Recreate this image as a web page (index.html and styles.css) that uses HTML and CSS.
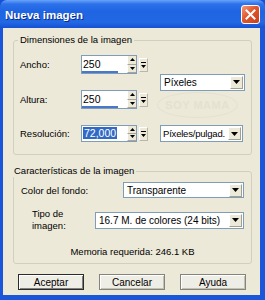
FILE: index.html
```
<!DOCTYPE html>
<html lang="es">
<head>
    <meta charset="UTF-8">
    <title>Nueva imagen</title>
    <link rel="stylesheet" href="styles.css">
</head>
<body>
    <div class="window">
        <div class="title-bar">
            <span class="title-text">Nueva imagen</span>
            <span class="close-btn">
                <svg width="11" height="11" viewBox="0 0 11 11">
                    <path d="M1.5 1.5 L9.5 9.5 M9.5 1.5 L1.5 9.5" stroke="#fff" stroke-width="2" stroke-linecap="square"/>
                </svg>
            </span>
        </div>
        <div class="window-body">
            <fieldset class="group dims">
                <legend>Dimensiones de la imagen</legend>
                <div class="watermark"><span>SOY MAMA</span></div>
                <div class="dims-grid">
                    <label class="field-label">Ancho:</label>
                    <div class="spin-box">
                        <div class="spin-text">
                            <span class="spin-value">250</span>
                            <span class="spin-bar"></span>
                        </div>
                        <div class="spin-arrows">
                            <span class="arrow"><svg width="5" height="3" viewBox="0 0 5 3"><path d="M2.5 0 L5 3 L0 3 Z" fill="#000"/></svg></span>
                            <span class="arrow"><svg width="5" height="3" viewBox="0 0 5 3"><path d="M0 0 L5 0 L2.5 3 Z" fill="#000"/></svg></span>
                        </div>
                    </div>
                    <span class="spin-menu"><svg width="5" height="6" viewBox="0 0 5 6"><path d="M0 0 H5 V1 H0 Z M0 3 H5 L2.5 6 Z" fill="#000"/></svg></span>

                    <div class="combo units">
                        <span class="combo-text">Píxeles</span>
                        <span class="combo-btn"><svg width="7" height="4" viewBox="0 0 7 4"><path d="M0 0 H7 L3.5 4 Z" fill="#000"/></svg></span>
                    </div>

                    <label class="field-label">Altura:</label>
                    <div class="spin-box">
                        <div class="spin-text">
                            <span class="spin-value">250</span>
                            <span class="spin-bar"></span>
                        </div>
                        <div class="spin-arrows">
                            <span class="arrow"><svg width="5" height="3" viewBox="0 0 5 3"><path d="M2.5 0 L5 3 L0 3 Z" fill="#000"/></svg></span>
                            <span class="arrow"><svg width="5" height="3" viewBox="0 0 5 3"><path d="M0 0 L5 0 L2.5 3 Z" fill="#000"/></svg></span>
                        </div>
                    </div>
                    <span class="spin-menu"><svg width="5" height="6" viewBox="0 0 5 6"><path d="M0 0 H5 V1 H0 Z M0 3 H5 L2.5 6 Z" fill="#000"/></svg></span>

                    <label class="field-label">Resolución:</label>
                    <div class="spin-box">
                        <div class="spin-text">
                            <span class="spin-value selected">72,000</span>
                        </div>
                        <div class="spin-arrows">
                            <span class="arrow"><svg width="5" height="3" viewBox="0 0 5 3"><path d="M2.5 0 L5 3 L0 3 Z" fill="#000"/></svg></span>
                            <span class="arrow"><svg width="5" height="3" viewBox="0 0 5 3"><path d="M0 0 L5 0 L2.5 3 Z" fill="#000"/></svg></span>
                        </div>
                    </div>
                    <span class="spin-menu"><svg width="5" height="6" viewBox="0 0 5 6"><path d="M0 0 H5 V1 H0 Z M0 3 H5 L2.5 6 Z" fill="#000"/></svg></span>

                    <div class="combo res-units">
                        <span class="combo-text">Píxeles/pulgad.</span>
                        <span class="combo-btn"><svg width="7" height="4" viewBox="0 0 7 4"><path d="M0 0 H7 L3.5 4 Z" fill="#000"/></svg></span>
                    </div>
                </div>
            </fieldset>

            <fieldset class="group traits">
                <legend>Características de la imagen</legend>
                <div class="trait-row">
                    <span class="field-label">Color del fondo:</span>
                    <div class="combo bg-combo">
                        <span class="combo-text">Transparente</span>
                        <span class="combo-btn"><svg width="7" height="4" viewBox="0 0 7 4"><path d="M0 0 H7 L3.5 4 Z" fill="#000"/></svg></span>
                    </div>
                </div>
                <div class="trait-row type-row">
                    <span class="field-label">Tipo de<br>imagen:</span>
                    <div class="combo type-combo">
                        <span class="combo-text">16.7 M. de colores (24 bits)</span>
                        <span class="combo-btn"><svg width="7" height="4" viewBox="0 0 7 4"><path d="M0 0 H7 L3.5 4 Z" fill="#000"/></svg></span>
                    </div>
                </div>
                <div class="memory">Memoria requerida: 246.1 KB</div>
            </fieldset>

            <div class="button-row">
                <button class="btn default">Aceptar</button>
                <button class="btn">Cancelar</button>
                <button class="btn">Ayuda</button>
            </div>
        </div>
    </div>
</body>
</html>
```

FILE: styles.css
```
html, body {
    margin: 0;
    padding: 0;
}
body {
    font-family: 'Liberation Sans', Arial, sans-serif;
    font-size: 9.5px;
    color: #000;
    background-color: #1650d8;
}
.window {
    width: 265px;
    height: 300px;
    display: flex;
    flex-direction: column;
    background-color: #1a55da;
    border-radius: 7px 7px 0 0;
    overflow: hidden;
}
.title-bar {
    height: 28px;
    flex: none;
    display: flex;
    align-items: center;
    padding-left: 5px;
    background: linear-gradient(to bottom, #6aa5fb 0%, #2d72ea 14%, #1f64e2 40%, #2268e4 80%, #1550d2 100%);
}
.title-text {
    color: white;
    font-weight: bold;
    font-size: 11.5px;
    text-shadow: 1px 1px 0 #0a2c8a;
    padding-top: 1px;
}
.close-btn {
    margin-left: auto;
    margin-right: 5px;
    width: 17px;
    height: 17px;
    border: 1px solid #fff;
    border-radius: 3px;
    background: linear-gradient(135deg, #f29a7c 0%, #e0562d 45%, #c8401d 100%);
    display: flex;
    align-items: center;
    justify-content: center;
}
.window-body {
    flex: 1;
    margin: 0 5px 5px 3px;
    background-color: #ece9d8;
    padding: 6px 8px 0 10px;
}
.group {
    margin: 0;
    border: 1px solid #d0d0bf;
    border-radius: 3px;
    position: relative;
}
.group legend {
    padding: 0 2px;
    margin-left: -2px;
    line-height: 12px;
}
.dims {
    padding: 9px 5px 12px 6px;
}
.dims-grid {
    display: grid;
    grid-template-columns: 59px 56px 9px 85px;
    grid-template-rows: 19px 19px 17px;
    column-gap: 2px;
    row-gap: 16px;
    position: relative;
}
.field-label {
    align-self: center;
}
.spin-box {
    display: flex;
    border: 1px solid #7f9db9;
    background-color: white;
}
.spin-text {
    flex: 1;
    display: flex;
    flex-direction: column;
    justify-content: space-between;
}
.spin-value {
    padding: 2px 0 0 1px;
    font-size: 10.5px;
}
.spin-value.selected {
    align-self: flex-start;
    margin: 1px 0 0 1px;
    padding: 0 1px;
    background-color: #316ac5;
    color: white;
}
.spin-bar {
    width: 36px;
    height: 2px;
    background-color: #4a78c8;
}
.spin-arrows {
    width: 9px;
    display: flex;
    flex-direction: column;
    background-color: #ece9d8;
}
.spin-arrows .arrow {
    flex: 1;
    display: flex;
    align-items: center;
    justify-content: center;
    border-left: 1px solid #fff;
    border-bottom: 1px solid #a7a69b;
}
.spin-menu {
    align-self: center;
    height: 14px;
    display: flex;
    align-items: center;
    justify-content: center;
    background-color: #ece9d8;
    border: 1px solid #b9b7aa;
    border-top-color: #fff;
    border-left-color: #fff;
    box-sizing: border-box;
}
.combo {
    display: flex;
    align-items: center;
    box-sizing: border-box;
    height: 17px;
    border: 1px solid #7f9db9;
    background-color: white;
    padding: 1px;
}
.combo-text {
    flex: 1;
    padding-left: 2px;
    font-size: 10px;
    white-space: nowrap;
    overflow: hidden;
}
.combo-btn {
    width: 13px;
    height: 13px;
    box-sizing: border-box;
    display: flex;
    align-items: center;
    justify-content: center;
    background-color: #ece9d8;
    border: 1px solid #a09f94;
    border-top-color: #fff;
    border-left-color: #fff;
}
.units {
    grid-column: 4;
    grid-row: 1 / 3;
    align-self: center;
    margin-left: 10px;
    width: 85px;
}
.res-units {
    grid-column: 4;
    grid-row: 3;
    margin-left: 10px;
    width: 83px;
}
.res-units .combo-text {
    font-size: 9.5px;
    letter-spacing: -0.2px;
    padding-left: 1px;
}
.watermark {
    position: absolute;
    left: 143px;
    top: 46px;
    width: 79px;
    height: 24px;
    border: 1px solid #e4e1d1;
    border-radius: 50%;
    display: flex;
    align-items: center;
    justify-content: center;
}
.watermark span {
    font-weight: bold;
    font-size: 11px;
    color: #e4e1d1;
    letter-spacing: 0.5px;
}
.traits {
    margin-top: 10px;
    padding: 5px 7px 5px 0;
}
.trait-row {
    display: flex;
    align-items: center;
}
.trait-row .field-label {
    padding-left: 7px;
}
.bg-combo {
    margin-left: auto;
    width: 121px;
    height: 16px;
}
.type-row {
    margin-top: 10px;
}
.type-row .field-label {
    padding-left: 18px;
    line-height: 12px;
}
.type-combo {
    margin-left: auto;
    width: 149px;
}
.memory {
    text-align: center;
    margin-top: 14px;
    line-height: 12px;
    padding-left: 7px;
}
.button-row {
    display: flex;
    gap: 15px;
    margin: 10px 0 0 5px;
}
.btn {
    width: 66px;
    height: 16px;
    padding: 0;
    font-family: 'Liberation Sans', Arial, sans-serif;
    font-size: 10px;
    color: #000;
    background-color: #efeee6;
    border: 1px solid #85847c;
    box-shadow: inset 1px 1px 0 #fff, inset -1px -1px 0 #c3c1b5;
}
.btn.default {
    border-color: #2b2b2b;
    box-shadow: inset 1px 1px 0 #fff, inset -1px -1px 0 #808080;
}
```
